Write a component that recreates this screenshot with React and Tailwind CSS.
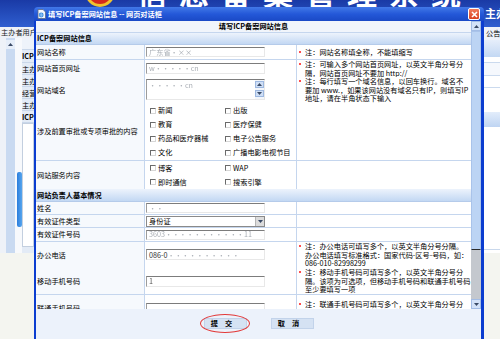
import React from 'react'

function Field({ h = 'h-[10px]', children }) {
  return (
    <div className={`flex ${h} w-[119px] items-center overflow-hidden border border-t-[#7c7c7c] border-l-[#9c9c9c] border-r-[#e8e8e8] border-b-[#e8e8e8] bg-white pl-[2px]`}>
      {children}
    </div>
  )
}

function Blur({ children, dark }) {
  return <span className={`whitespace-nowrap blur-[0.7px] ${dark ? 'text-[#555]' : 'text-[#a9aeb5]'}`}>{children}</span>
}

function Dot() {
  return <span className="mr-[4px] mt-[3px] h-[2px] w-[2px] shrink-0 rounded-full bg-[#ff1010]" />
}

function Note({ lines }) {
  return (
    <div className="flex items-start pl-[2px]">
      <Dot />
      <div>
        {lines.map((l, i) => (
          <div key={i} className="whitespace-nowrap">{l}</div>
        ))}
      </div>
    </div>
  )
}

function Row({ h, label, children, note }) {
  return (
    <div className={`grid shrink-0 grid-cols-[109px_152px_1fr] border-b border-[#c5d6ee] ${h}`}>
      <div className="flex items-center whitespace-nowrap border-r border-[#c5d6ee] bg-[#f6f9fd] pl-[1px]">{label}</div>
      <div className="flex items-center border-r border-[#c5d6ee] bg-white pl-[1px]">{children}</div>
      <div className="flex items-center bg-white">{note}</div>
    </div>
  )
}

function Section({ h, children }) {
  return (
    <div className={`flex shrink-0 items-center border-b border-[#b5cbea] bg-linear-to-b from-[#edf3fc] to-[#c3d8f3] pl-[1px] font-bold ${h}`}>
      {children}
    </div>
  )
}

function Check({ label }) {
  return (
    <div className="flex h-[14px] items-center">
      <span className="h-[6px] w-[6px] shrink-0 border border-t-[#6a6a6a] border-l-[#6a6a6a] border-r-[#d6d6d6] border-b-[#d6d6d6] bg-white" />
      <span className="ml-[2px] whitespace-nowrap">{label}</span>
    </div>
  )
}

function Arrow({ up }) {
  return (
    <svg width="5" height="3" viewBox="0 0 5 3">
      <path d={up ? 'M0 3 L2.5 0 L5 3 Z' : 'M0 0 L2.5 3 L5 0 Z'} fill="#3a4a66" />
    </svg>
  )
}

export default function App() {
  return (
    <div className="relative h-[339px] w-[500px] overflow-hidden bg-[#f4f5f0] font-['Noto_Sans_CJK_SC','Noto_Sans',sans-serif] text-[7.2px] leading-[8.5px] text-black">
      {/* page behind the dialog */}
      <div className="grid h-[27px] grid-cols-[485px_1fr] bg-[#2448b8] bg-linear-to-b from-[#1a3aa6] to-[#2f5ed0]">
        <div className="flex h-[7px] items-end overflow-hidden">
          <div className="ml-[85px] h-[30px] w-[30px] shrink-0 rounded-full border-[3px] border-[#f0c22e] bg-[#d42a1c]" />
          <div className="ml-[22px] h-[30px] shrink-0 whitespace-nowrap text-[30px] font-bold leading-[30px] tracking-[12px] text-white">信息备案管理系统</div>
        </div>
        <div className="whitespace-nowrap pt-[7px] text-[11px] font-bold leading-[12px] text-white">主办者</div>
      </div>

      <div className="grid grid-cols-[34px_1fr]">
        <div className="flex flex-col">
          <div className="h-[11px] overflow-hidden whitespace-nowrap bg-[#eef2f8] pl-[1px] leading-[11px] text-[#1a1a1a]">主办者用户</div>
          <div className="flex h-[215px]">
            <div className="w-[6px] bg-[#eef2f8]" />
            <div className="flex w-[9px] flex-col bg-[#c9daf1]">
              <div className="mt-[2px] flex h-[9px] items-center justify-center bg-[#e6eef9]">
                <Arrow up />
              </div>
            </div>
            <div className="flex w-[7px] flex-col bg-[#f7f9fc]">
              <div className="ml-[2px] mt-[134px] h-[55px] w-[5px] rounded-[2px] bg-linear-to-r from-[#2a7ddc] to-[#57a6ee]" />
            </div>
            <div className="flex w-[12px] flex-col overflow-hidden bg-[#e3ebf6] font-bold">
              <div className="h-[12px] border-b border-[#c9d7ea] bg-[#eef3fa]" />
              <div className="h-[13px] whitespace-nowrap border-b border-[#c9d7ea] pt-[2px]">ICP</div>
              <div className="h-[12px] whitespace-nowrap border-b border-[#c9d7ea] pt-[2px] font-normal">主办</div>
              <div className="h-[12px] whitespace-nowrap border-b border-[#c9d7ea] pt-[2px] font-normal">主办</div>
              <div className="h-[12px] whitespace-nowrap border-b border-[#c9d7ea] pt-[2px] font-normal">经营</div>
              <div className="h-[12px] whitespace-nowrap border-b border-[#c9d7ea] pt-[2px] font-normal">主办</div>
              <div className="h-[12px] whitespace-nowrap border-b border-[#c9d7ea] pt-[2px]">ICP</div>
              <div className="h-[124px] border border-[#c3cfdf] bg-white" />
            </div>
          </div>
        </div>
        <div className="flex flex-col bg-white">
          <div className="h-[13px] whitespace-nowrap bg-[#eef2f9] pl-[452px] leading-[13px]">公告</div>
          <div className="h-[17px] bg-linear-to-b from-[#e6eefb] to-[#c3d8f3]" />
          <div className="h-[6px] border-b border-[#cbdaee]" />
          <div className="h-[13px] border-b border-[#cbdaee] bg-[#f5f8fd]" />
          <div className="h-[12px] border-b border-[#cbdaee]" />
          <div className="h-[24px]" />
          <div className="h-[15px] bg-linear-to-b from-[#e3edfb] to-[#bed4f2]" />
          <div className="h-[123px] border-b border-[#c9d8ec]" />
        </div>
      </div>

      {/* dialog window */}
      <div className="absolute left-[34px] top-[7px] z-10 flex h-[332px] w-[450px] flex-col rounded-t-[4px] bg-[#0b3dd0]">
        <div className="flex h-[14px] shrink-0 items-center rounded-t-[4px] bg-[#2458d8] bg-linear-to-b from-[#4379e8] via-[#2458d8] to-[#1a49c6] pl-[3px] pr-[4px]">
          <svg width="9" height="10" viewBox="0 0 9 10">
            <path d="M1 0.5 H6 L8.5 3 V9.5 H1 Z" fill="#f4f6fa" stroke="#5b6b86" strokeWidth="0.8" />
            <circle cx="4.2" cy="6" r="2.4" fill="#3a8de0" />
            <path d="M2.4 6 H6 M4.2 3.7 V8.3" stroke="#bfe0ff" strokeWidth="0.6" />
          </svg>
          <span className="ml-[2px] whitespace-nowrap font-bold text-white">填写ICP备案网站信息 -- 网页对话框</span>
          <span className="ml-auto flex h-[12px] w-[12px] items-center justify-center rounded-[2px] border border-white bg-linear-to-b from-[#f07a5a] to-[#d8401e]">
            <svg width="7" height="7" viewBox="0 0 7 7">
              <path d="M1 1 L6 6 M6 1 L1 6" stroke="#fff" strokeWidth="1.6" />
            </svg>
          </span>
        </div>

        <div className="flex flex-1 flex-col pl-[2px] pr-[3px]">
          <div className="flex h-[288px] shrink-0 bg-white">
            <div className="flex w-[435px] flex-col overflow-hidden">
              <div className="flex h-[12px] shrink-0 items-center justify-center border-b border-[#c5d6ee] bg-[#f1f5fb] font-bold">
                填写ICP备案网站信息
              </div>
              <Section h="h-[12px]">ICP备案网站信息</Section>
              <Row h="h-[15px]" label="网站名称" note={<Note lines={['注：网站名称填全称，不能填缩写']} />}>
                <Field><Blur>广东省·××</Blur></Field>
              </Row>
              <Row h="h-[17px]" label="网站首页网址" note={<Note lines={['注：可输入多个网站首页网址，以英文半角分号分', '隔，网站首页网址不要加 http://']} />}>
                <Field h="h-[11px]"><Blur>w·····cn</Blur></Field>
              </Row>
              <Row
                h="h-[26px]"
                label="网站域名"
                note={<Note lines={['注：每行填写一个域名信息，以回车换行。域名不', '要加 www.，如果该网站没有域名只有IP，则填写IP', '地址，请在半角状态下输入']} />}
              >
                <div className="flex h-[21px] w-[119px] border border-t-[#7c7c7c] border-l-[#9c9c9c] border-r-[#e8e8e8] border-b-[#e8e8e8] bg-white">
                  <div className="flex-1 pl-[2px] pt-[1px]"><Blur>·····cn</Blur></div>
                  <div className="flex w-[9px] flex-col gap-[2px] bg-[#f3f6fb] pt-[1px]">
                    <span className="flex h-[7px] items-center justify-center border border-[#9db8e0] bg-[#cfdff6]"><Arrow up /></span>
                    <span className="flex h-[7px] items-center justify-center border border-[#9db8e0] bg-[#cfdff6]"><Arrow /></span>
                  </div>
                </div>
              </Row>
              <Row h="h-[58px]" label="涉及前置审批或专项审批的内容">
                <div className="grid grid-cols-[75px_75px] pl-[4px]">
                  <Check label="新闻" />
                  <Check label="出版" />
                  <Check label="教育" />
                  <Check label="医疗保健" />
                  <Check label="药品和医疗器械" />
                  <Check label="电子公告服务" />
                  <Check label="文化" />
                  <Check label="广播电影电视节目" />
                </div>
              </Row>
              <Row h="h-[28px]" label="网站服务内容">
                <div className="grid grid-cols-[75px_75px] pl-[4px]">
                  <Check label="博客" />
                  <Check label="WAP" />
                  <Check label="即时通信" />
                  <Check label="搜索引擎" />
                </div>
              </Row>
              <Section h="h-[13px]">网站负责人基本情况</Section>
              <Row h="h-[13px]" label="姓名" note={<div className="pl-[2px]"><Dot /></div>}>
                <Field><Blur>··</Blur></Field>
              </Row>
              <Row h="h-[13px]" label="有效证件类型" note={<div className="pl-[2px]"><Dot /></div>}>
                <div className="flex h-[11px] w-[119px] items-center border border-[#8a8a8a] bg-white">
                  <span className="flex-1 pl-[2px]">身份证</span>
                  <span className="flex h-full w-[9px] items-center justify-center border-l border-[#b5b5b5] bg-[#dcdcdc]"><Arrow /></span>
                </div>
              </Row>
              <Row h="h-[14px]" label="有效证件号码" note={<div className="pl-[2px]"><Dot /></div>}>
                <Field><Blur>3603···········11</Blur></Field>
              </Row>
              <Row
                h="h-[26px]"
                label="办公电话"
                note={<Note lines={['注：办公电话可填写多个，以英文半角分号分隔。', '办公电话填写标准格式：国家代码-区号-号码，如：', '086-010-82998299']} />}
              >
                <Field h="h-[11px]"><span className="text-[#333]">086-0</span><Blur>··········</Blur></Field>
              </Row>
              <Row
                h="h-[27px]"
                label="移动手机号码"
                note={<Note lines={['注：移动手机号码可填写多个，以英文半角分号分', '隔。该项为可选项，但移动手机号码和联通手机号码', '至少要填写一项']} />}
              >
                <Field h="h-[11px]"><Blur dark>1</Blur></Field>
              </Row>
              <Row
                h="h-[27px]"
                label="联通手机号码"
                note={<Note lines={['注：联通手机号码可填写多个，以英文半角分号分', '隔，该项为可选项，但移动手机号码和联通手机号码']} />}
              >
                <Field h="h-[11px]"><span /></Field>
              </Row>
            </div>

            {/* scrollbar */}
            <div className="flex w-[10px] flex-col bg-[#c4c8ce]">
              <div className="flex h-[10px] shrink-0 items-center justify-center border border-[#a3bde6] bg-[#d3e2f8]"><Arrow up /></div>
              <div className="h-[219px] shrink-0 border border-[#a9c3ea] border-b-[#2b2b2b] bg-[#bcd4f4]" />
              <div className="flex-1" />
              <div className="flex h-[10px] shrink-0 items-center justify-center border border-[#a3bde6] bg-[#d3e2f8]"><Arrow /></div>
            </div>
          </div>

          <div className="flex flex-1 items-center justify-center gap-[24px] bg-[#ecf2fb] pb-[1px]">
            <div className="relative">
              <button className="flex h-[11px] w-[43px] items-center justify-center border border-[#c2d3ea] bg-[#d5e2f3] font-bold tracking-[7px]">提交</button>
              <span className="absolute -bottom-[4px] -left-[4px] -right-[3px] -top-[4px] rounded-[50%] border border-[#e23a3a]" />
            </div>
            <button className="flex h-[11px] w-[43px] items-center justify-center border border-[#c2d3ea] bg-[#d5e2f3] font-bold tracking-[7px]">取消</button>
          </div>
        </div>
      </div>
    </div>
  )
}
